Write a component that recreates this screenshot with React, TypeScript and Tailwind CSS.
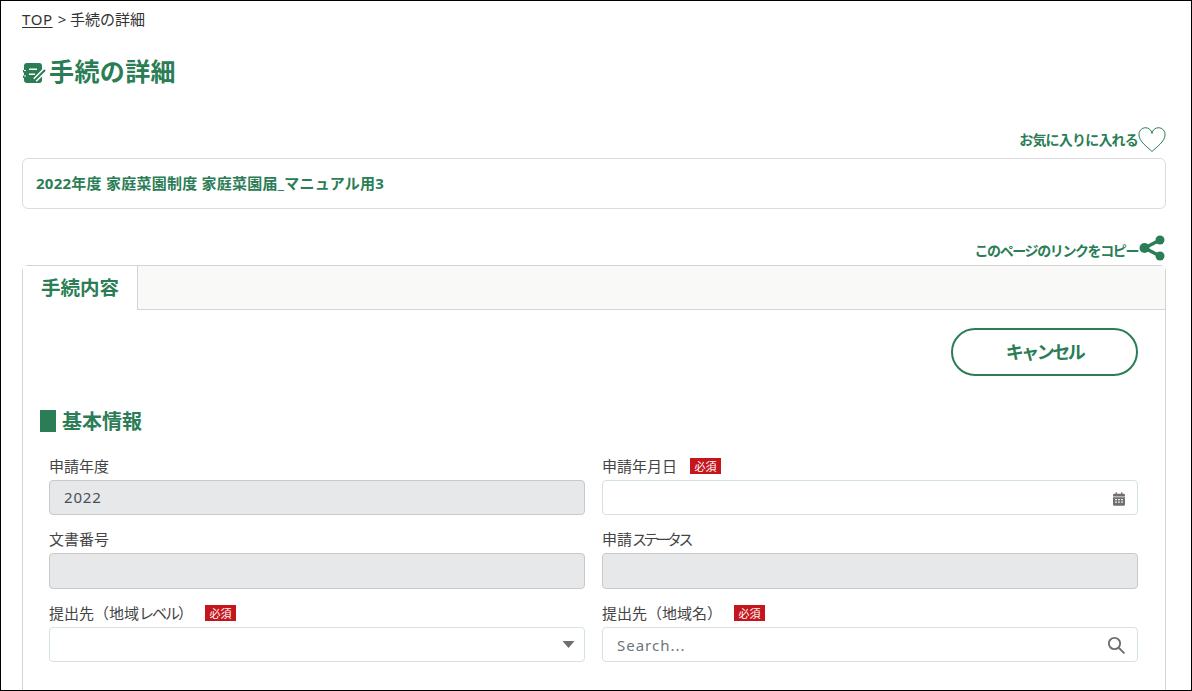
const green = "text-[#2a7d55]";

function Required({ gap }: { gap: string }) {
  return (
    <span className={`flex h-[16px] w-[31px] items-center justify-center bg-[#c4161c] text-[11px] leading-none text-white ${gap}`}>
      必須
    </span>
  );
}

function Field({
  label,
  required,
  gap = "ml-[13px]",
  children,
}: {
  label: React.ReactNode;
  required?: boolean;
  gap?: string;
  children: React.ReactNode;
}) {
  return (
    <div className="flex flex-col">
      <div className="flex h-[24px] items-center pb-[4px]">
        <span className="text-[15px] leading-none text-[#444]">{label}</span>
        {required && <Required gap={gap} />}
      </div>
      {children}
    </div>
  );
}

function Disabled({ value, height = "h-[35px]" }: { value?: string; height?: string }) {
  return (
    <div className={`flex items-center rounded-[4px] border border-[#c8c9ca] bg-[#e7e8ea] px-[14px] text-[15px] tracking-[0.8px] text-[#495057] ${height}`}>
      {value}
    </div>
  );
}

function Input({ children }: { children?: React.ReactNode }) {
  return (
    <div className="flex h-[35px] items-center justify-between rounded-[4px] border border-[#d5e3e0] bg-white pl-[14px] pr-[12px]">
      {children}
    </div>
  );
}

export default function App() {
  return (
    <div className="h-[691px] w-[1192px] overflow-hidden border border-black bg-white font-['Noto_Sans','Noto_Sans_CJK_JP',sans-serif]">
      <div className="pl-[21px] pr-[25px]">
        <div className="flex h-[50px] items-start pt-[8px] text-[15px] leading-[20px] text-[#333]">
          <span className="tracking-[0.6px] underline underline-offset-2">TOP</span>
          <span className="ml-[5px]">&gt; 手続の詳細</span>
        </div>
        <div className="flex h-[40px] items-center pt-[1px]">
          <svg viewBox="0 0 24 22" className="h-[22px] w-[24px] shrink-0" fill="#2a7d55">
            <path d="M5 2h12a3 3 0 0 1 3 3v14a3 3 0 0 1-3 3H5a3 3 0 0 1-3-3v-2H1v-2.500h1v-3H1V9h1V5a3 3 0 0 1 3-3z" />
            <path d="M7 7.500h8v1.500H7zM7 12.500h6v1.500H7zM2 9h2v1H2zM2 14.500h2v1H2z" fill="#fff" />
            <path d="M22.500 9.500L13 19" stroke="#fff" strokeWidth="5" fill="none" />
            <path d="M22.500 9.500L13 19" stroke="#2a7d55" strokeWidth="2" strokeLinecap="round" fill="none" />
          </svg>
          <h1 className={`ml-[3px] text-[25px] font-bold leading-none tracking-[0.4px] ${green}`}>手続の詳細</h1>
        </div>

        <div className="mt-[36px] flex h-[30px] items-center justify-end pb-[4px]">
          <span className={`text-[14px] font-bold leading-none tracking-[-0.8px] ${green}`}>お気に入りに入れる</span>
          <svg viewBox="0 0 28 26" className="h-[26px] w-[28px] shrink-0" fill="none" stroke="#2a7d55" strokeWidth="1">
            <path d="M14 24.500C10 20.500 1 14.500 1 8a6.500 6.500 0 0 1 13-1.500A6.500 6.500 0 0 1 27 8c0 6.500-9 12.500-13 16.500z" />
          </svg>
        </div>
        <div className="mt-[1px] flex h-[51px] items-center rounded-[6px] border border-[#dcdcdc] pl-[13px] pr-[14px]">
          <span className={`text-[15px] font-bold leading-none tracking-[0.25px] ${green}`}>
            2022年度 家庭菜園制度 家庭菜園届_マニュアル用3
          </span>
        </div>

        <div className="mt-[26px] flex h-[30px] items-center justify-end">
          <span className={`mt-[2px] text-[14px] font-bold leading-none tracking-[-1.4px] ${green}`}>このページのリンクをコピー</span>
          <svg viewBox="0 0 28 26" className="-mt-[5px] h-[26px] w-[28px] shrink-0 text-[#2a7d55]" fill="currentColor">
            <circle cx="6.500" cy="13" r="5" />
            <circle cx="22" cy="5" r="4.500" />
            <circle cx="22" cy="21" r="4.500" />
            <path d="M6.500 13L22 5M6.500 13L22 21" strokeWidth="3.500" stroke="currentColor" fill="none" />
          </svg>
        </div>

        <div className="rounded-t-[6px] border border-[#d4d4d4]">
          <div className="flex h-[44px] bg-[#f9f9f7]">
            <div className={`flex w-[115px] items-center justify-center border-r border-[#d4d4d4] bg-white pb-[1px] text-[19.500px] font-bold leading-none ${green}`}>
              手続内容
            </div>
            <div className="flex-1 border-b border-[#d4d4d4]" />
          </div>
          <div className="px-[17px] pb-[40px] pt-[18px]">
            <div className="flex justify-end pr-[10px]">
              <button className={`flex h-[48px] w-[187px] items-center justify-center rounded-full border-2 border-[#2a7d55] bg-white text-[18px] font-bold leading-none tracking-[-2.500px] ${green}`}>
                キャンセル
              </button>
            </div>
            <div className="mt-[34px] flex h-[22px] items-center">
              <span className="h-[22px] w-[16px] bg-[#2a7d55]" />
              <span className={`ml-[6px] pt-[2px] text-[20px] font-bold leading-none ${green}`}>基本情報</span>
            </div>
            <div className="mt-[24px] grid grid-cols-2 gap-x-[17px] gap-y-[14px] pl-[9px] pr-[10px]">
              <Field label="申請年度">
                <Disabled value="2022" />
              </Field>
              <Field label="申請年月日" required>
                <Input>
                  <svg viewBox="0 0 14 16" className="ml-auto mt-[3px] h-[14px] w-[12px]" fill="#6f6f6f">
                    <path d="M3 0h1.500v2h5V0H11v2h1.500A1.500 1.500 0 0 1 14 3.500V5H0V3.500A1.500 1.500 0 0 1 1.500 2H3z" />
                    <path fillRule="evenodd" d="M0 6h14v8.500a1.500 1.500 0 0 1-1.500 1.500h-11A1.500 1.500 0 0 1 0 14.500zM2.500 8v1.500h2V8zm3.500 0v1.500h2V8zm3.500 0v1.500h2V8zM2.500 11v1.500h2V11zM6 11v1.500h2V11zm3.500 0v1.500h2V11z" />
                  </svg>
                </Input>
              </Field>
              <Field label="文書番号">
                <Disabled height="h-[36px]" />
              </Field>
              <Field label={<>申請<span className="tracking-[-3.400px]">ステータス</span></>}>
                <Disabled height="h-[36px]" />
              </Field>
              <Field label={<>提出先（地域<span className="tracking-[-2px]">レベル</span>）</>} required gap="ml-[12px]">
                <Input>
                  <span />
                  <svg viewBox="0 0 12 7" className="-mr-[3px] h-[7px] w-[13px]" fill="#6f6f6f">
                    <path d="M0 0h12L6 7z" />
                  </svg>
                </Input>
              </Field>
              <Field label="提出先（地域名）" required gap="ml-[12px]">
                <Input>
                  <span className="pt-[1px] text-[15px] tracking-[1px] text-[#6c757d]">Search...</span>
                  <svg viewBox="0 0 24 24" className="h-[18px] w-[18px]" fill="none" stroke="#6f6f6f" strokeWidth="2.500" strokeLinecap="round">
                    <circle cx="10" cy="10" r="7.500" />
                    <path d="M16 16l6.500 6.500" />
                  </svg>
                </Input>
              </Field>
            </div>
          </div>
        </div>
      </div>
    </div>
  );
}
